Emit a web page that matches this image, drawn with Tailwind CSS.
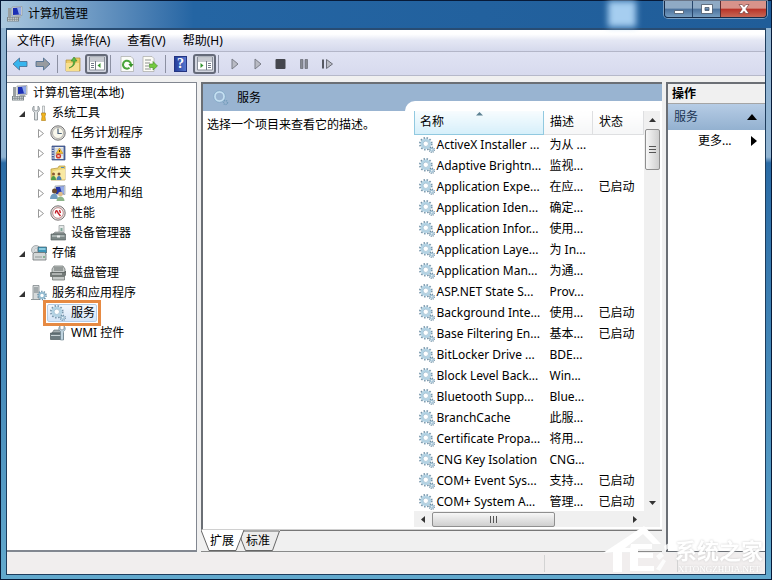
<!DOCTYPE html>
<html lang="zh-CN">
<head>
    <meta charset="UTF-8" />
    <meta name="viewport" content="width=device-width, initial-scale=1.0" />
    <title>计算机管理</title>
    <script src="https://cdn.jsdelivr.net/npm/@tailwindcss/browser@4"></script>
</head>
<body class="h-screen overflow-hidden bg-[#05122b] font-['Noto_Sans','Noto_Sans_CJK_SC',sans-serif] text-xs text-black">

    <!-- Icon sprites -->
    <svg class="hidden" aria-hidden="true">
        <symbol id="gears" viewBox="0 0 16 16">
            <circle cx="6.8" cy="6.8" r="5.8" fill="none" stroke="#7796ab" stroke-width="2" stroke-dasharray="1.5 1.54" />
            <circle cx="6.8" cy="6.8" r="4.1" fill="none" stroke="#b3d3e4" stroke-width="2.4" />
            <circle cx="6.8" cy="6.8" r="2.7" fill="#fff" stroke="#8fb3c8" stroke-width=".7" />
            <circle cx="12.8" cy="12.8" r="2.5" fill="none" stroke="#7290a4" stroke-width="1.4" stroke-dasharray="1 .96" />
            <circle cx="12.8" cy="12.8" r="1.4" fill="#fff" stroke="#9dbfd3" stroke-width="1.3" />
        </symbol>
        <symbol id="computer" viewBox="0 0 16 16">
            <path d="M5 1l10-.5v9L5 10z" fill="#d9dcda" stroke="#8b9193" stroke-width=".6" />
            <path d="M6 2l8-.5v7L6 9z" fill="#1b2fb4" />
            <path d="M10 1.800l4-.3v7l-2 .1z" fill="#8fa8ea" />
            <path d="M1 2h3v9H1z" fill="#9aa0a2" />
            <path d="M8 10h5l1 2H7z" fill="#a9aeae" />
            <path d="M0 11h12v4.500H0z" fill="#7b8589" />
            <path d="M1 12.200h10M1 14.200h10" stroke="#e5e9e9" stroke-width="1" stroke-dasharray="1.600 .7" />
        </symbol>
        <symbol id="tools" viewBox="0 0 16 16">
            <path d="M3 1v4l2 1 2-1V1c2 1.500 2 5-.5 6.300V15h-3V7.300C1 6 1 2.500 3 1z" fill="#dde1e3" stroke="#82898d" stroke-width=".8" />
            <path d="M11.500 1h2v7h-2z" fill="#eceeee" stroke="#8e9496" stroke-width=".6" />
            <path d="M10.500 8h4v2l-.6 1 .6 4.500h-4l.6-4.500-.6-1z" fill="#f1b41d" stroke="#ad7b12" stroke-width=".6" />
        </symbol>
        <symbol id="clock" viewBox="0 0 16 16">
            <circle cx="8" cy="8" r="7.200" fill="#dedddb" stroke="#777776" />
            <circle cx="8" cy="8" r="5.500" fill="#f9f8ec" stroke="#a3a29c" stroke-width=".8" />
            <path d="M8 3.500V8.500h3.800" fill="none" stroke="#4c637c" stroke-width="1.200" />
        </symbol>
        <symbol id="events" viewBox="0 0 16 16">
            <path d="M2 1h13v14H2z" fill="#5169a6" stroke="#334779" stroke-width=".7" />
            <path d="M4.500 2h9v12h-9z" fill="#eff1ea" />
            <path d="M5 4h8M5 6h8M5 8h8M5 10h8" stroke="#9baacd" stroke-width=".6" />
            <path d="M1 3h3M1 5.500h3M1 8h3M1 10.500h3M1 13h3" stroke="#c9cfdd" />
            <path d="M9.500 3l3.500 5.500H6z" fill="#f7c02a" stroke="#b2811a" stroke-width=".5" />
            <path d="M9.500 5v2" stroke="#4c3908" />
            <circle cx="8.500" cy="11" r="2.600" fill="#d23b2c" />
            <path d="M7.500 10l2 2m0-2l-2 2" stroke="#fff" stroke-width=".8" />
        </symbol>
        <symbol id="shared" viewBox="0 0 16 16">
            <path d="M1 4l7-1 1-2h6v14H1z" fill="#edd473" stroke="#b3943a" stroke-width=".7" />
            <path d="M3 6l12-2v10.500H3z" fill="#f8e9a3" />
            <path d="M11 2.500h3" stroke="#4f8bc0" />
            <circle cx="3.500" cy="9" r="1.500" fill="#8a5a33" /><circle cx="9" cy="9" r="1.500" fill="#7d4d2a" />
            <path d="M1 15c0-5.500 5-5.500 5 0z" fill="#4f9b45" /><path d="M6.500 15c0-5.500 5-5.500 5 0z" fill="#4b7fb4" />
        </symbol>
        <symbol id="users" viewBox="0 0 16 16">
            <path d="M5 1l10-.5v9L5 10z" fill="#d5dadd" stroke="#848e98" stroke-width=".6" />
            <path d="M6 2l8-.5v7L6 9z" fill="#2438ab" /><path d="M10 1.800l4-.3v7l-2 .1z" fill="#93aae6" />
            <circle cx="4.500" cy="6" r="2.500" fill="#694b30" /><circle cx="10.500" cy="9" r="2.300" fill="#dfbc8a" />
            <path d="M0 14c0-7 8-7 8 0z" fill="#6f9cc0" /><path d="M6.500 16c0-6 8-6 8 0z" fill="#8db58a" />
        </symbol>
        <symbol id="perf" viewBox="0 0 16 16">
            <circle cx="8" cy="8" r="7.200" fill="#e2dfdf" stroke="#7e7777" />
            <circle cx="8" cy="8" r="5.300" fill="#fff" stroke="#b27474" stroke-width=".8" />
            <path d="M5.500 8.500c0-4 2-3 2.500-.5l2.500 3M9.500 5l1 3" fill="none" stroke="#c5202a" stroke-width="1.400" />
        </symbol>
        <symbol id="device" viewBox="0 0 16 16">
            <path d="M9 .5h5v8H9z" fill="#e3e7e6" stroke="#929999" stroke-width=".7" /><path d="M10.500 3h2v3h-2z" fill="#7fa698" />
            <path d="M3 9l2-2h8l2 2z" fill="#a4aaa9" stroke="#666d6c" stroke-width=".5" />
            <path d="M1 9h14.500v6H1z" fill="#7c8887" stroke="#4f5857" stroke-width=".6" />
            <path d="M2 11h12.500" stroke="#d3dad9" /><path d="M7 10.500h3v2H7z" fill="#eceeee" />
        </symbol>
        <symbol id="storage" viewBox="0 0 16 16">
            <circle cx="5" cy="5" r="4.500" fill="#d4d9db" stroke="#8e9497" stroke-width=".7" /><circle cx="5" cy="5" r="1.300" fill="#fff" stroke="#9ba1a3" stroke-width=".5" />
            <path d="M7 2h8.500v6H7z" fill="#3d97bb" stroke="#44606b" stroke-width=".7" /><path d="M8 3h6.500v2H8z" fill="#8ccbe0" />
            <path d="M2 9l1-1.500h10.500l1.500 1.500v6H2z" fill="#d3d7d7" stroke="#6e7576" stroke-width=".8" />
            <path d="M4 12h7" stroke="#8f9797" /><path d="M13 11v2" stroke="#3d8f54" />
        </symbol>
        <symbol id="disk" viewBox="0 0 16 16">
            <path d="M2 4l2-3h9l2 3v4H2z" fill="#c5c9c8" stroke="#626a68" stroke-width=".7" />
            <path d="M4 3h9M4 5h9" stroke="#646c6a" />
            <path d="M.5 7.500h14l1-1.500v4l-1 1.500H.5z" fill="#747b79" stroke="#474e4c" stroke-width=".6" />
            <path d="M2.500 11.500h12v3.500h-12z" fill="#c5c9c8" stroke="#656b69" stroke-width=".7" /><path d="M2 9h10" stroke="#e8eae9" />
        </symbol>
        <symbol id="server" viewBox="0 0 16 16">
            <path d="M2 .5h6v14H2z" fill="#d5d9da" stroke="#747c80" stroke-width=".7" />
            <path d="M3 3h4M3 5h4M3 7h4" stroke="#707a7e" /><path d="M0 14.500h9" stroke="#90989b" />
            <circle cx="11" cy="10.500" r="4" fill="none" stroke="#668da6" stroke-width="1.700" stroke-dasharray="1.300 1.210" />
            <circle cx="11" cy="10.500" r="2.600" fill="#fff" stroke="#91bad0" stroke-width="1.700" />
        </symbol>
        <symbol id="wmi" viewBox="0 0 16 16">
            <path d="M2 8l2-3h6l2 3z" fill="#a3adaf" stroke="#586164" stroke-width=".6" />
            <path d="M.5 8h13v6.500H.5z" fill="#6c7a7e" stroke="#3d494d" stroke-width=".6" /><path d="M1 10.500h10" stroke="#c7d1d3" />
            <path d="M10 1v3l2 1 2-1V1c2 2 1.500 4-.5 5.500V15h-3V6.500C8.500 5 8 3 10 1z" fill="#bed3df" stroke="#677c88" stroke-width=".6" />
        </symbol>
        <symbol id="play" viewBox="0 0 16 16">
            <path d="M5 3l6 5-6 5z" fill="#b9bbc4" stroke="#7b7e88" />
        </symbol>
        <symbol id="arrow" viewBox="0 0 16 14">
            <path d="M1 7l6.500-6v3.500H15v5H7.500V13z" fill="currentColor" stroke="#46688c" stroke-width=".8" />
        </symbol>
    </svg>

    <div class="flex h-full flex-col border border-[#071a38] bg-linear-to-b from-[#91b4d2] from-27% via-[#2a6ba5] via-28% to-[#62a9cd] px-[5px] pb-1">

        <!-- Title bar -->
        <header class="-mx-[5px] flex h-[27px] shrink-0 items-start bg-linear-to-r from-[#abc8df] via-[#2465a3] via-25% to-[#205d99] pl-[6px]">
            <h1 class="flex h-[26px] grow items-center gap-[5px]">
                <svg class="size-4"><use href="#computer" /></svg>计算机管理
            </h1>
            <span class="mr-7 h-[26px] w-7 bg-[#a6cef0] blur-[3px]"></span>
            <div class="mr-1 flex h-[17px] overflow-hidden rounded-b border border-t-0 border-[#172c49] ring-1 ring-white/40">
                <button type="button" aria-label="最小化" class="flex w-7 items-center justify-center border-r border-[#28466c] bg-linear-to-b from-[#8faac5] from-45% via-[#4b719c] via-50% to-[#769dc1]">
                    <svg class="h-3 w-4" viewBox="0 0 16 12"><path d="M3.500 7.500h9v3h-9z" fill="#fff" stroke="#4a5768" stroke-width=".8" /></svg>
                </button>
                <button type="button" aria-label="最大化" class="flex w-[27px] items-center justify-center bg-linear-to-b from-[#8faac5] from-45% via-[#4b719c] via-50% to-[#769dc1]">
                    <svg class="h-3 w-4" viewBox="0 0 16 12"><path d="M2.500 1.500h11v9h-11zM6 4.500v3h4v-3z" fill="#fff" fill-rule="evenodd" stroke="#4a5768" stroke-width=".8" /></svg>
                </button>
                <button type="button" aria-label="关闭" class="flex w-[46px] items-center justify-center border-l border-[#5b2c31] bg-linear-to-b from-[#d8938a] from-45% via-[#b83127] via-50% to-[#c76655]">
                    <svg class="h-3 w-4" viewBox="0 0 16 12"><path d="M3 1.500h3.200L8 3.800l1.800-2.300H13L9.800 6l3.200 4.500H9.800L8 8.200l-1.800 2.300H3L6.200 6z" fill="#fff" stroke="#633" stroke-width=".6" /></svg>
                </button>
            </div>
        </header>

        <div class="flex min-h-0 grow flex-col border border-t-2 border-[#1d3c5c] border-t-[#284c73] bg-[#f0f0f0]">

            <!-- Menu -->
            <nav class="flex h-[22px] shrink-0 items-center gap-[17px] border-b border-[#b3b6c8] bg-linear-to-b from-white from-20% via-[#e4e7f4] via-50% to-[#d5d9ec] px-[10px]">
                <button type="button">文件(F)</button>
                <button type="button">操作(A)</button>
                <button type="button">查看(V)</button>
                <button type="button">帮助(H)</button>
            </nav>

            <!-- Toolbar -->
            <div class="flex h-6 shrink-0 items-center border-b border-[#b6b9ca] bg-linear-to-b from-[#e0e3f3] to-[#d7daee] pl-[5px]">
                <button type="button" aria-label="后退" class="mr-[7px] text-[#37b5ee]"><svg class="h-[14px] w-4"><use href="#arrow" /></svg></button>
                <button type="button" aria-label="前进" class="rotate-180 text-[#979ba0]"><svg class="h-[14px] w-4"><use href="#arrow" /></svg></button>
                <span class="mx-[6px] h-[18px] w-px bg-[#8c90a2]"></span>
                <button type="button" aria-label="向上一级" class="ml-[1px]">
                    <svg class="size-4" viewBox="0 0 16 16"><path d="M1 4h7l1-2h6v13H1z" fill="#edcb65" stroke="#af8c36" stroke-width=".7" /><path d="M1 7h13v8H1z" fill="#f7df8d" /><path d="M4 12c4-2 5-4 4-7H6l3-4 3 4h-2c0 4-2 6-6 7z" fill="#5bb947" stroke="#388126" stroke-width=".6" /></svg>
                </button>
                <button type="button" aria-label="显示/隐藏控制台树" class="ml-1 flex h-5 w-[23px] items-center justify-center rounded-[3px] border-2 border-[#656a79] bg-[#d2d5df]">
                    <svg class="h-[15px] w-4" viewBox="0 0 16 15"><path d="M.5 1h15v13H.5z" fill="#fff" stroke="#888e99" /><path d="M1 3h14M1 5h14" stroke="#9096a4" /><path d="M6.500 5v9M2 7.500h3M2 9.500h3M2 11.500h3" stroke="#747b89" /><path d="M11.500 7v5l-3-2.500z" fill="#389533" /></svg>
                </button>
                <span class="mr-2 ml-[2px] h-[18px] w-px bg-[#8c90a2]"></span>
                <button type="button" aria-label="刷新">
                    <svg class="size-4" viewBox="0 0 16 16"><path d="M2 .5h10l2.500 2.500v12.500H2z" fill="#fbfcf9" stroke="#a7aaa6" stroke-width=".7" /><path d="M10.500 11.800A4 4 0 1 1 12 8.500" fill="none" stroke="#49a43b" stroke-width="2" /><path d="M9.300 8h5.200L12 11.500z" fill="#389329" /></svg>
                </button>
                <button type="button" aria-label="导出列表" class="ml-[7px]">
                    <svg class="size-4" viewBox="0 0 16 16"><path d="M1 .5h9l2 2v13H1z" fill="#fcfcf6" stroke="#a9aaa5" stroke-width=".7" /><path d="M3 4h6M3 7h5M3 10h4M3 13h6" stroke="#8e938f" /><path d="M7.500 8h3.500V5.500L15.500 10 11 14v-2.500H7.500z" fill="#73c93f" stroke="#408925" stroke-width=".6" /></svg>
                </button>
                <span class="mx-[7px] h-[18px] w-px bg-[#8c90a2]"></span>
                <button type="button" aria-label="帮助主题" class="ml-[1px] flex h-4 w-[13px] items-center justify-center border border-[#253581] bg-linear-to-r from-[#253e9c] to-[#5777cf] font-['Liberation_Serif',serif] text-sm leading-4 font-bold text-white">?</button>
                <button type="button" aria-label="显示/隐藏操作窗格" class="ml-[6px] flex h-5 w-[23px] items-center justify-center rounded-[3px] border-2 border-[#656a79] bg-[#d2d5df]">
                    <svg class="h-[15px] w-4" viewBox="0 0 16 15"><path d="M.5 1h15v13H.5z" fill="#fff" stroke="#888e99" /><path d="M1 3h14M1 5h14" stroke="#9096a4" /><path d="M9.500 5v9M11 7.500h3M11 9.500h3M11 11.500h3" stroke="#747b89" /><path d="M3.500 7v5l3-2.500z" fill="#389533" /></svg>
                </button>
                <span class="mr-2 ml-[2px] h-[18px] w-px bg-[#8c90a2]"></span>
                <div class="flex items-center gap-[7px]">
                    <button type="button" aria-label="启动服务"><svg class="size-4"><use href="#play" /></svg></button>
                    <button type="button" aria-label="启动"><svg class="size-4"><use href="#play" /></svg></button>
                    <button type="button" aria-label="停止服务"><svg class="size-4" viewBox="0 0 16 16"><rect x="2.500" y="3" width="10" height="10" rx="1" fill="#44464d" /></svg></button>
                    <button type="button" aria-label="暂停服务"><svg class="size-4" viewBox="0 0 16 16"><path d="M4.500 3.500H7v9H4.500zM9 3.500h2.500v9H9z" fill="#888b93" stroke="#666973" stroke-width=".7" /></svg></button>
                    <button type="button" aria-label="重新启动服务"><svg class="size-4" viewBox="0 0 16 16"><path d="M3 3.500h2v9H3z" fill="#575a63" /><path d="M7.500 3.500l6 4.500-6 4.500z" fill="#b9bbc4" stroke="#6b6e78" /></svg></button>
                </div>
            </div>

            <main class="flex min-h-0 grow gap-1 pt-[6px]">

                <!-- Console tree -->
                <nav class="w-[190px] shrink-0 border-t border-r border-b-2 border-[#828790] bg-white pl-[5px]">
                    <ul id="tree"></ul>
                </nav>

                <!-- Services -->
                <section class="flex min-w-0 grow flex-col">
                    <div class="flex min-h-0 grow border-t-2 border-b border-l-2 border-[#6b6f75] border-b-[#d0d0d0] bg-white">
                        <div class="w-[202px] shrink-0">
                            <h2 class="flex h-[27px] items-center gap-2 bg-[#99b4d1] pl-[10px]">
                                <svg class="size-4" viewBox="0 0 16 16"><circle cx="6.500" cy="6.500" r="4.700" fill="none" stroke="#c5e0f2" stroke-width="2" /><circle cx="6.500" cy="6.500" r="5.800" fill="none" stroke="#7ea5c3" stroke-width=".7" /><circle cx="12.500" cy="12.500" r="2" fill="none" stroke="#719bb9" stroke-width="1.400" stroke-dasharray="1 .8" /></svg>
                                服务
                            </h2>
                            <p class="px-1 pt-[5px] leading-[18px] whitespace-nowrap">选择一个项目来查看它的描述。</p>
                        </div>
                        <div class="flex min-w-0 grow flex-col bg-[#99b4d1] pt-[17px]">
                            <div class="flex min-h-0 grow flex-col rounded-tl-[10px] bg-white pt-[10px] pr-[2px] pb-[2px] pl-[9px]">
                                <div class="flex min-h-0 grow">
                                    <div class="min-w-0 grow overflow-hidden">
                                        <table class="w-full table-fixed border-collapse text-left">
                                            <thead>
                                                <tr class="h-[23px]">
                                                    <th class="relative w-[129px] border border-t-0 border-[#91c9e0] bg-linear-to-b from-[#f7fcfe] to-[#d6effa] px-[5px] font-normal">
                                                        名称
                                                        <svg class="absolute top-0 left-[61px] h-[5px] w-[7px]" viewBox="0 0 7 5"><path d="M0 4.500L3.500 1 7 4.500z" fill="#5d8192" /></svg>
                                                    </th>
                                                    <th class="w-[49px] border-r border-b border-[#dedfe1] bg-linear-to-b from-white to-[#f5f6f7] px-[6px] font-normal">描述</th>
                                                    <th class="border-r border-b border-[#dedfe1] bg-linear-to-b from-white to-[#f5f6f7] px-[6px] font-normal">状态</th>
                                                </tr>
                                            </thead>
                                            <tbody id="services"></tbody>
                                        </table>
                                    </div>
                                    <div class="flex w-4 shrink-0 flex-col items-center bg-[#f0f0f0]">
                                        <button type="button" aria-label="向上滚动" class="flex h-[18px] items-center"><svg class="h-1 w-[7px]" viewBox="0 0 7 4"><path d="M0 4l3.500-4L7 4z" fill="#333" /></svg></button>
                                        <div class="flex h-[41px] w-[15px] items-center justify-center rounded-[2px] border border-[#8f8f8f] bg-linear-to-r from-[#f7f7f7] to-[#cfcfcf]">
                                            <svg class="h-[9px] w-[7px]" viewBox="0 0 7 9"><path d="M0 1.500h7M0 4.500h7M0 7.500h7" stroke="#555" /></svg>
                                        </div>
                                        <button type="button" aria-label="向下滚动" class="mt-auto flex h-[17px] items-center"><svg class="h-1 w-[7px]" viewBox="0 0 7 4"><path d="M0 0l3.500 4L7 0z" fill="#333" /></svg></button>
                                    </div>
                                </div>
                                <div class="flex h-4 shrink-0 items-center bg-[#f0f0f0] pr-4">
                                    <button type="button" aria-label="向左滚动" class="flex w-[18px] justify-center"><svg class="h-[7px] w-1" viewBox="0 0 4 7"><path d="M4 0L0 3.500 4 7z" fill="#333" /></svg></button>
                                    <div class="flex h-[15px] w-[123px] items-center justify-center rounded-[2px] border border-[#8f8f8f] bg-linear-to-b from-[#f7f7f7] to-[#cfcfcf]">
                                        <svg class="h-[7px] w-[9px]" viewBox="0 0 9 7"><path d="M1.500 0v7M4.500 0v7M7.500 0v7" stroke="#555" /></svg>
                                    </div>
                                    <button type="button" aria-label="向右滚动" class="ml-auto flex w-[18px] justify-center"><svg class="h-[7px] w-1" viewBox="0 0 4 7"><path d="M0 0l4 3.500L0 7z" fill="#333" /></svg></button>
                                </div>
                            </div>
                        </div>
                    </div>

                    <!-- View tabs -->
                    <div class="flex h-[22px] shrink-0 border-b border-[#8a8a8a]">
                        <div class="grid h-[21px] w-[79px] shrink-0">
                            <svg class="col-start-1 row-start-1 h-[21px] w-[79px]" viewBox="0 0 79 21">
                                <path d="M41.500 1h37l-7 19.500h-27L40 9z" fill="#ececec" stroke="#666" />
                                <path d="M0 0l8 20.500h27L43 0z" fill="#fff" />
                                <path d="M0 0l8 20.500h27L43 0" fill="none" stroke="#666" />
                            </svg>
                            <div class="z-10 col-start-1 row-start-1 flex items-center gap-3 pl-[9px]">
                                <button type="button">扩展</button>
                                <button type="button">标准</button>
                            </div>
                        </div>
                        <div class="grow border-t border-[#777]"></div>
                    </div>
                </section>

                <!-- Actions -->
                <aside class="w-[99px] shrink-0 border-t-2 border-b border-l-2 border-[#6b6f75] bg-white">
                    <h2 class="flex h-5 items-center border-b border-[#a5a5a5] bg-[#f0f0f0] px-1 font-bold">操作</h2>
                    <button type="button" class="flex h-[26px] w-full items-center justify-between bg-linear-to-b from-[#b6cce5] to-[#93b1d0] pr-2 pl-[6px] text-[#1c3554]">
                        服务
                        <svg class="h-[6px] w-[10px]" viewBox="0 0 10 6"><path d="M0 6l5-6 5 6z" fill="#000" /></svg>
                    </button>
                    <button type="button" class="flex h-[22px] w-full items-center justify-between pr-2 pl-[30px]">
                        更多...
                        <svg class="h-[10px] w-[6px]" viewBox="0 0 6 10"><path d="M0 0l6 5-6 5z" fill="#000" /></svg>
                    </button>
                </aside>
            </main>

            <!-- Status bar -->
            <footer class="mt-px flex h-[21px] shrink-0 bg-[#f1eeee] py-[2px]">
                <span class="grow border-r border-[#d3d3d3]"></span>
                <span class="w-[133px] border-r border-[#d3d3d3]"></span>
                <span class="w-[87px]"></span>
            </footer>
        </div>
    </div>

    <!-- Site watermark -->
    <div class="pointer-events-none absolute right-[9px] bottom-[6px] flex items-end gap-1 text-white">
        <svg class="h-12 w-[68px]" viewBox="0 0 68 48" fill="#fff">
            <path d="M0 27L41 0l17 18h-8L40 8 22 22h9l-4 4H19v20h-9V26z" />
            <path d="M28 18h21v5H35v4h15v5H35v8h16v5H27V23z" />
            <path d="M53 30l5-4 3 4-5 4zM61 20l5-3v5l-4 3zM53 43l7-10 3 2-6 10z" opacity=".8" />
        </svg>
        <div class="text-center drop-shadow-[0_0_1px_#ccc]">
            <p class="text-[22px] leading-7 font-bold">系统之家</p>
            <p class="font-['Liberation_Serif',serif] text-[9px] leading-[10px]">XITONGZHIJIA.NET</p>
        </div>
    </div>

    <script>
        const tree = [
            { level: 0, icon: 'computer', label: '计算机管理(本地)' },
            { level: 1, icon: 'tools', label: '系统工具', state: 'open' },
            { level: 2, icon: 'clock', label: '任务计划程序', state: 'closed' },
            { level: 2, icon: 'events', label: '事件查看器', state: 'closed' },
            { level: 2, icon: 'shared', label: '共享文件夹', state: 'closed' },
            { level: 2, icon: 'users', label: '本地用户和组', state: 'closed' },
            { level: 2, icon: 'perf', label: '性能', state: 'closed' },
            { level: 2, icon: 'device', label: '设备管理器' },
            { level: 1, icon: 'storage', label: '存储', state: 'open' },
            { level: 2, icon: 'disk', label: '磁盘管理' },
            { level: 1, icon: 'server', label: '服务和应用程序', state: 'open' },
            { level: 2, icon: 'gears', label: '服务', selected: true },
            { level: 2, icon: 'wmi', label: 'WMI 控件' }
        ];
        const indent = ['', 'pl-[6px]', 'pl-[25px]'];
        const toggles = {
            open: '<path d="M7 3v6H1z" fill="#333"/>',
            closed: '<path d="M1.500 1.500l5 4-5 4z" fill="#fff" stroke="#999"/>'
        };

        document.getElementById('tree').innerHTML = tree.map(item => `
            <li class="flex h-5 items-center ${indent[item.level]}">
                ${item.level ? `<svg class="mr-[2px] h-[11px] w-[11px] shrink-0" viewBox="0 0 11 11">${toggles[item.state] || ''}</svg>` : ''}
                <a href="#" class="${item.selected
                    ? '-my-1 -ml-[7px] flex h-[26px] items-center border-[3px] border-[#e68a43] bg-white p-px'
                    : 'flex items-center whitespace-nowrap'}">
                    <span class="${item.selected
                        ? 'flex h-[18px] items-center gap-[5px] rounded-[2px] border border-[#b5cde6] bg-linear-to-b from-[#f2f7fd] to-[#d5e5f7] pr-px pl-[2px]'
                        : 'flex items-center gap-[5px]'}">
                        <svg class="size-4 shrink-0"><use href="#${item.icon}"/></svg>${item.label}
                    </span>
                </a>
            </li>`).join('');

        const services = [
            ['ActiveX Installer ...', '为从 ...', ''],
            ['Adaptive Brightn...', '监视...', ''],
            ['Application Expe...', '在应...', '已启动'],
            ['Application Iden...', '确定...', ''],
            ['Application Infor...', '使用...', ''],
            ['Application Laye...', '为 In...', ''],
            ['Application Man...', '为通...', ''],
            ['ASP.NET State S...', 'Prov...', ''],
            ['Background Inte...', '使用...', '已启动'],
            ['Base Filtering En...', '基本...', '已启动'],
            ['BitLocker Drive ...', 'BDE...', ''],
            ['Block Level Back...', 'Win...', ''],
            ['Bluetooth Supp...', 'Blue...', ''],
            ['BranchCache', '此服...', ''],
            ['Certificate Propa...', '将用...', ''],
            ['CNG Key Isolation', 'CNG...', ''],
            ['COM+ Event Sys...', '支持...', '已启动'],
            ['COM+ System A...', '管理...', '已启动']
        ];

        document.getElementById('services').innerHTML = services.map(([name, desc, status]) => `
            <tr class="h-[21px] whitespace-nowrap">
                <td class="p-0"><span class="flex items-center gap-[2px] pl-1"><svg class="size-4 shrink-0"><use href="#gears"/></svg>${name}</span></td>
                <td class="p-0 pl-[6px]">${desc}</td>
                <td class="p-0 pl-[6px]">${status}</td>
            </tr>`).join('');
    </script>
</body>
</html>
